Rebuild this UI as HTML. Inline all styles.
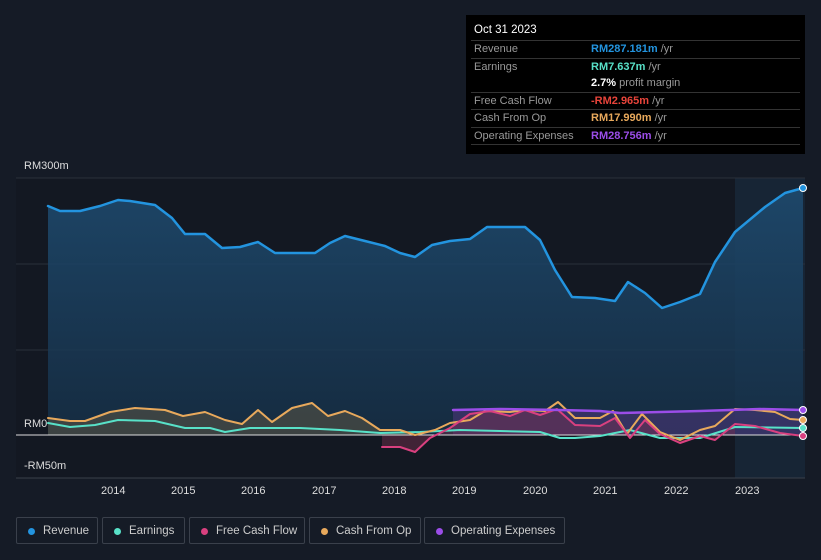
<!DOCTYPE html><html><head><style>
body{margin:0;background:#151b26;width:821px;height:560px;overflow:hidden;font-family:"Liberation Sans",sans-serif;position:relative}
.tip{position:absolute;left:466px;top:15px;width:339px;height:139px;background:#000;color:#fff;font-size:11px}
.tip .h{padding:9px 8px 4px;font-size:11.5px}
.row{display:flex;border-top:1px solid #333;height:16.5px;line-height:16.5px;margin:0 5px;padding-left:3px}
.row .l{width:117px;color:#999}
.u{color:#999}
.lg{position:absolute;top:517px;height:27px;border:1px solid #3a404b;border-radius:2px;color:#ccc;font-size:11.5px;line-height:27px;box-sizing:border-box;padding-left:26px}
.lg i{position:absolute;left:11px;top:10px;width:7px;height:7px;border-radius:50%}
.ax{position:absolute;color:#ddd;font-size:11px}
path{stroke-linejoin:round;stroke-linecap:round}
</style></head><body>
<svg width="821" height="560" style="position:absolute;left:0;top:0">
<defs><linearGradient id="g" x1="0" y1="0" x2="0" y2="1"><stop offset="0" stop-color="#1e4a6e" stop-opacity=".9"/><stop offset="1" stop-color="#163048" stop-opacity=".8"/></linearGradient></defs>
<rect x="16" y="178" width="789" height="300" fill="#131822"/>
<rect x="735" y="178" width="70" height="300" fill="#1a2e42" opacity=".6"/>
<line x1="16" y1="178" x2="805" y2="178" stroke="#2a303a"/>
<line x1="16" y1="264" x2="805" y2="264" stroke="#2a303a"/>
<line x1="16" y1="350" x2="805" y2="350" stroke="#2a303a"/>
<line x1="16" y1="478" x2="805" y2="478" stroke="#3a404b"/>
<path d="M48,206 L60,211 L80,211 L100,206 L118,200 L130,201 L155,205 L172,218 L185,234 L205,234 L222,248 L240,247 L258,242 L275,253 L315,253 L330,243 L345,236 L365,241 L385,246 L400,253 L415,257 L432,245 L450,241 L470,239 L487,227 L525,227 L540,240 L555,270 L572,297 L595,298 L615,301 L628,282 L645,293 L662,308 L680,302 L700,294 L715,262 L735,232 L765,207 L785,193 L803,188 L803,435 L48,435Z" fill="url(#g)"/>
<path d="M48,206 L60,211 L80,211 L100,206 L118,200 L130,201 L155,205 L172,218 L185,234 L205,234 L222,248 L240,247 L258,242 L275,253 L315,253 L330,243 L345,236 L365,241 L385,246 L400,253 L415,257 L432,245 L450,241 L470,239 L487,227 L525,227 L540,240 L555,270 L572,297 L595,298 L615,301 L628,282 L645,293 L662,308 L680,302 L700,294 L715,262 L735,232 L765,207 L785,193 L803,188" fill="none" stroke="#2394df" stroke-width="2.5"/>
<path d="M453,410 L500,409 L560,410 L600,411 L620,413 L700,411 L760,409 L803,410 L803,435 L453,435Z" fill="#5a3a8a" opacity=".45"/>
<path d="M48,418 L70,421 L85,421 L110,412 L135,408 L165,410 L183,416 L205,412 L225,420 L242,424 L258,410 L272,422 L292,408 L312,403 L328,416 L345,411 L362,418 L380,430 L400,430 L415,435 L48,435Z" fill="#6a6045" opacity=".45"/>
<path d="M382,447 L400,447 L415,452 L430,438 L450,428 L470,414 L490,411 L510,416 L525,410 L540,415 L557,409 L575,425 L600,426 L615,418 L630,438 L645,420 L660,434 L680,443 L700,436 L715,440 L735,424 L735,435 L382,435Z" fill="#7a3050" opacity=".45"/>
<line x1="16" y1="435" x2="805" y2="435" stroke="#ddd" stroke-width="1"/>
<path d="M48,423 L70,427 L95,425 L118,420 L155,421 L185,428 L210,428 L225,432 L250,428 L300,428 L340,430 L380,433 L420,432 L460,430 L500,431 L540,432 L560,438 L575,438 L600,436 L630,430 L660,438 L700,438 L735,427 L803,428" fill="none" stroke="#58e1c8" stroke-width="2"/>
<path d="M48,418 L70,421 L85,421 L110,412 L135,408 L165,410 L183,416 L205,412 L225,420 L242,424 L258,410 L272,422 L292,408 L312,403 L328,416 L345,411 L362,418 L380,430 L400,430 L415,435 L435,430 L450,423 L470,420 L485,411 L510,412 L525,410 L545,411 L558,402 L575,418 L600,418 L613,411 L627,434 L642,414 L660,432 L680,440 L700,430 L715,426 L735,409 L755,410 L775,412 L790,419 L803,420" fill="none" stroke="#e8a95c" stroke-width="2"/>
<path d="M382,447 L400,447 L415,452 L430,438 L450,428 L470,414 L490,411 L510,416 L525,410 L540,415 L557,409 L575,425 L600,426 L615,418 L630,438 L645,420 L660,434 L680,443 L700,436 L715,440 L735,424 L755,426 L780,433 L803,436" fill="none" stroke="#d9407f" stroke-width="2"/>
<path d="M453,410 L500,409 L560,410 L600,411 L620,413 L700,411 L760,409 L803,410" fill="none" stroke="#9b4de8" stroke-width="2.5"/>
<circle cx="803" cy="188" r="3.5" fill="#2394df" stroke="#fff"/>
<circle cx="803" cy="410" r="3.5" fill="#9b4de8" stroke="#fff"/>
<circle cx="803" cy="420" r="3.5" fill="#e8a95c" stroke="#fff"/>
<circle cx="803" cy="428" r="3.5" fill="#58e1c8" stroke="#fff"/>
<circle cx="803" cy="436" r="3.5" fill="#d9407f" stroke="#fff"/>
</svg>
<div class="ax" style="left:24px;top:160px">RM300m</div>
<div class="ax" style="left:24px;top:418px">RM0</div>
<div class="ax" style="left:24px;top:460px">-RM50m</div>
<div class="ax" style="left:101px;top:485px">2014</div><div class="ax" style="left:171px;top:485px">2015</div><div class="ax" style="left:241px;top:485px">2016</div><div class="ax" style="left:312px;top:485px">2017</div><div class="ax" style="left:382px;top:485px">2018</div><div class="ax" style="left:452px;top:485px">2019</div><div class="ax" style="left:523px;top:485px">2020</div><div class="ax" style="left:593px;top:485px">2021</div><div class="ax" style="left:664px;top:485px">2022</div><div class="ax" style="left:735px;top:485px">2023</div>
<div class="tip"><div class="h">Oct 31 2023</div>
<div class="row"><span class="l">Revenue</span><span><b style="color:#2394df">RM287.181m</b> <span class="u">/yr</span></span></div>
<div class="row"><span class="l">Earnings</span><span><b style="color:#58e1c8">RM7.637m</b> <span class="u">/yr</span></span></div>
<div class="row" style="border:0"><span class="l"></span><span><b>2.7%</b> <span class="u">profit margin</span></span></div>
<div class="row"><span class="l">Free Cash Flow</span><span><b style="color:#e8443a">-RM2.965m</b> <span class="u">/yr</span></span></div>
<div class="row"><span class="l">Cash From Op</span><span><b style="color:#e8a95c">RM17.990m</b> <span class="u">/yr</span></span></div>
<div class="row" style="border-bottom:1px solid #333"><span class="l">Operating Expenses</span><span><b style="color:#9b4de8">RM28.756m</b> <span class="u">/yr</span></span></div>
</div>
<div class="lg" style="left:16px;width:82px"><i style="background:#2394df"></i>Revenue</div>
<div class="lg" style="left:102px;width:83px"><i style="background:#58e1c8"></i>Earnings</div>
<div class="lg" style="left:189px;width:116px"><i style="background:#d9407f"></i>Free Cash Flow</div>
<div class="lg" style="left:309px;width:112px"><i style="background:#e8a95c"></i>Cash From Op</div>
<div class="lg" style="left:424px;width:141px"><i style="background:#9b4de8"></i>Operating Expenses</div>
</body></html>
